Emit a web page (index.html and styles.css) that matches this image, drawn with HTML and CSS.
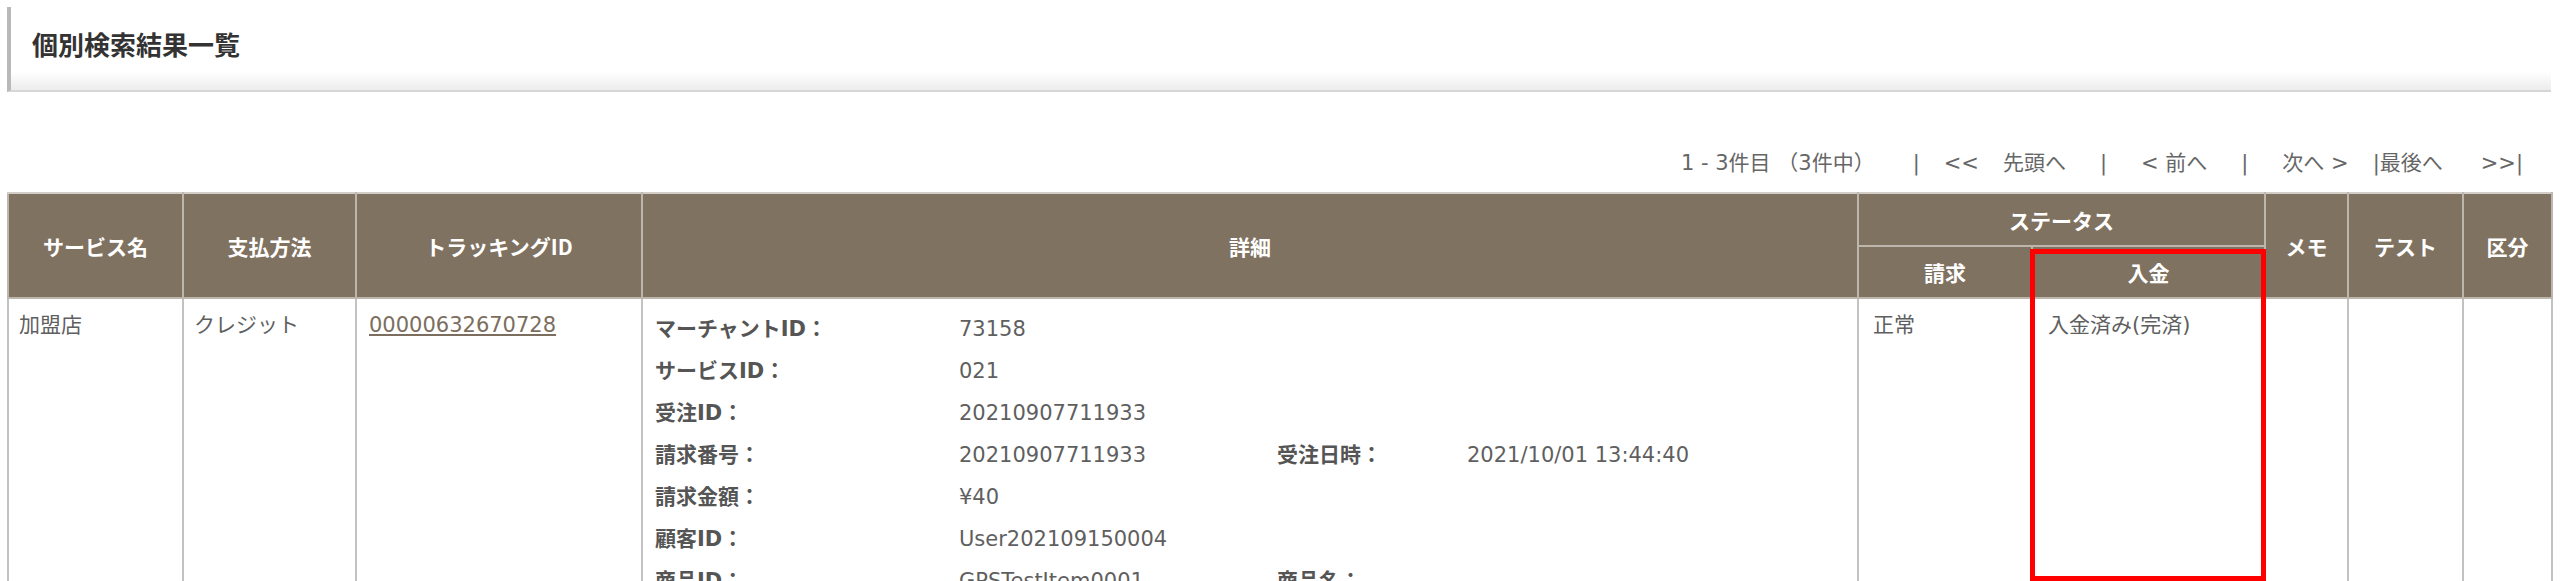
FILE: index.html
```html
<!DOCTYPE html>
<html lang="ja">
<head>
    <meta charset="UTF-8" />
    <meta name="viewport" content="width=device-width, initial-scale=1.0" />
    <title>個別検索結果一覧</title>
    <link rel="stylesheet" href="styles.css">
</head>
<body>
    <div class="page">
        <div class="title-box">
            <h2>個別検索結果一覧</h2>
        </div>

        <div class="pager">
            <span>1 - 3件目 （3件中）</span>
            <span class="gap-l">|</span>
            <a class="gap-s" href="#">&lt;&lt;</a>
            <a class="gap-s" href="#">先頭へ</a>
            <span class="gap-m">|</span>
            <a class="gap-m" href="#">&lt; 前へ</a>
            <span class="gap-m">|</span>
            <a class="gap-m" href="#">次へ &gt;</a>
            <span class="gap-s">|<a href="#">最後へ</a></span>
            <a class="gap-l" href="#">&gt;&gt;</a><span>|</span>
        </div>

        <table class="result">
            <colgroup>
                <col class="c-service">
                <col class="c-pay">
                <col class="c-track">
                <col class="c-detail">
                <col class="c-bill">
                <col class="c-deposit">
                <col class="c-memo">
                <col class="c-test">
                <col class="c-kind">
            </colgroup>
            <thead>
                <tr class="head-top">
                    <th rowspan="2">サービス名</th>
                    <th rowspan="2">支払方法</th>
                    <th rowspan="2">トラッキングID</th>
                    <th rowspan="2">詳細</th>
                    <th colspan="2">ステータス</th>
                    <th rowspan="2">メモ</th>
                    <th rowspan="2">テスト</th>
                    <th rowspan="2">区分</th>
                </tr>
                <tr class="head-sub">
                    <th>請求</th>
                    <th>入金</th>
                </tr>
            </thead>
            <tbody>
                <tr>
                    <td>加盟店</td>
                    <td>クレジット</td>
                    <td class="track"><a href="#">00000632670728</a></td>
                    <td class="detail">
                        <div class="detail-grid">
                            <span class="lbl">マーチャントID：</span><span>73158</span><span></span><span></span>
                            <span class="lbl">サービスID：</span><span>021</span><span></span><span></span>
                            <span class="lbl">受注ID：</span><span>20210907711933</span><span></span><span></span>
                            <span class="lbl">請求番号：</span><span>20210907711933</span><span class="lbl">受注日時：</span><span>2021/10/01 13:44:40</span>
                            <span class="lbl">請求金額：</span><span>¥40</span><span></span><span></span>
                            <span class="lbl">顧客ID：</span><span>User202109150004</span><span></span><span></span>
                            <span class="lbl">商品ID：</span><span>GPSTestItem0001</span><span class="lbl">商品名：</span><span></span>
                        </div>
                    </td>
                    <td class="status">正常</td>
                    <td class="status-dep">入金済み(完済)</td>
                    <td></td>
                    <td></td>
                    <td></td>
                </tr>
            </tbody>
        </table>

        <div class="mark-box"></div>
    </div>
</body>
</html>
```

FILE: styles.css
```css
body {
    margin: 0;
    padding: 0;
    background: #fff;
    font-family: "DejaVu Sans", "Noto Sans CJK JP", sans-serif;
    color: #5f5f5f;
}
.page {
    position: relative;
    padding: 7px 10px 0 7px;
}
.title-box {
    height: 83px;
    border-left: 4px solid #b9b9b9;
    border-bottom: 2px solid #d6d6d6;
    background: linear-gradient(to bottom, #fff 0%, #fff 78%, #ececec 100%);
}
.title-box h2 {
    margin: 0;
    padding: 22px 0 0 21px;
    font-size: 26px;
    line-height: 30px;
    font-family: "Noto Sans CJK JP", sans-serif;
    font-weight: bold;
    color: #333;
}
.pager {
    display: flex;
    justify-content: flex-end;
    align-items: center;
    margin: 56px 28px 14px 0;
    height: 30px;
    font-size: 21px;
    line-height: 30px;
    color: #666;
    white-space: pre;
}
.pager a {
    color: #666;
    text-decoration: none;
}
.gap-s {
    margin-left: 24px;
}
.gap-m {
    margin-left: 34px;
}
.gap-l {
    margin-left: 38px;
}
.result {
    width: 2544px;
    border-collapse: collapse;
    table-layout: fixed;
    font-size: 21px;
}
.c-service { width: 175px; }
.c-pay { width: 173px; }
.c-track { width: 286px; }
.c-detail { width: 1216px; }
.c-bill { width: 174px; }
.c-deposit { width: 233px; }
.c-memo { width: 83px; }
.c-test { width: 115px; }
.c-kind { width: 89px; }
.result th {
    background-color: #807261;
    color: #fff;
    font-family: "Noto Sans CJK JP", sans-serif;
    font-weight: bold;
    font-size: 21px;
    border: 2px solid #bdb6ad;
    padding: 0;
    text-align: center;
}
.head-top th {
    border-top-color: #d2cdc6;
}
.head-top {
    height: 53px;
}
.head-sub {
    height: 52px;
}
.result td {
    border: 2px solid #c2c2c2;
    border-top: none;
    vertical-align: top;
    padding: 5px 10px 0 10px;
    line-height: 42px;
    height: 300px;
}
.result td.track {
    padding-left: 12px;
}
.track a {
    color: #7c6e5e;
    text-decoration: underline;
}
.result td.detail {
    padding: 9px 12px 0 12px;
}
.detail-grid {
    display: grid;
    grid-template-columns: 304px 318px 190px 1fr;
    line-height: 42px;
}
.lbl {
    font-weight: bold;
    color: #555;
}
.result td.status {
    padding-left: 14px;
}
.result td.status-dep {
    padding-left: 15px;
}
.mark-box {
    position: absolute;
    left: 2030px;
    top: 249px;
    width: 226px;
    height: 322px;
    border: 5px solid #ff0000;
}
```
